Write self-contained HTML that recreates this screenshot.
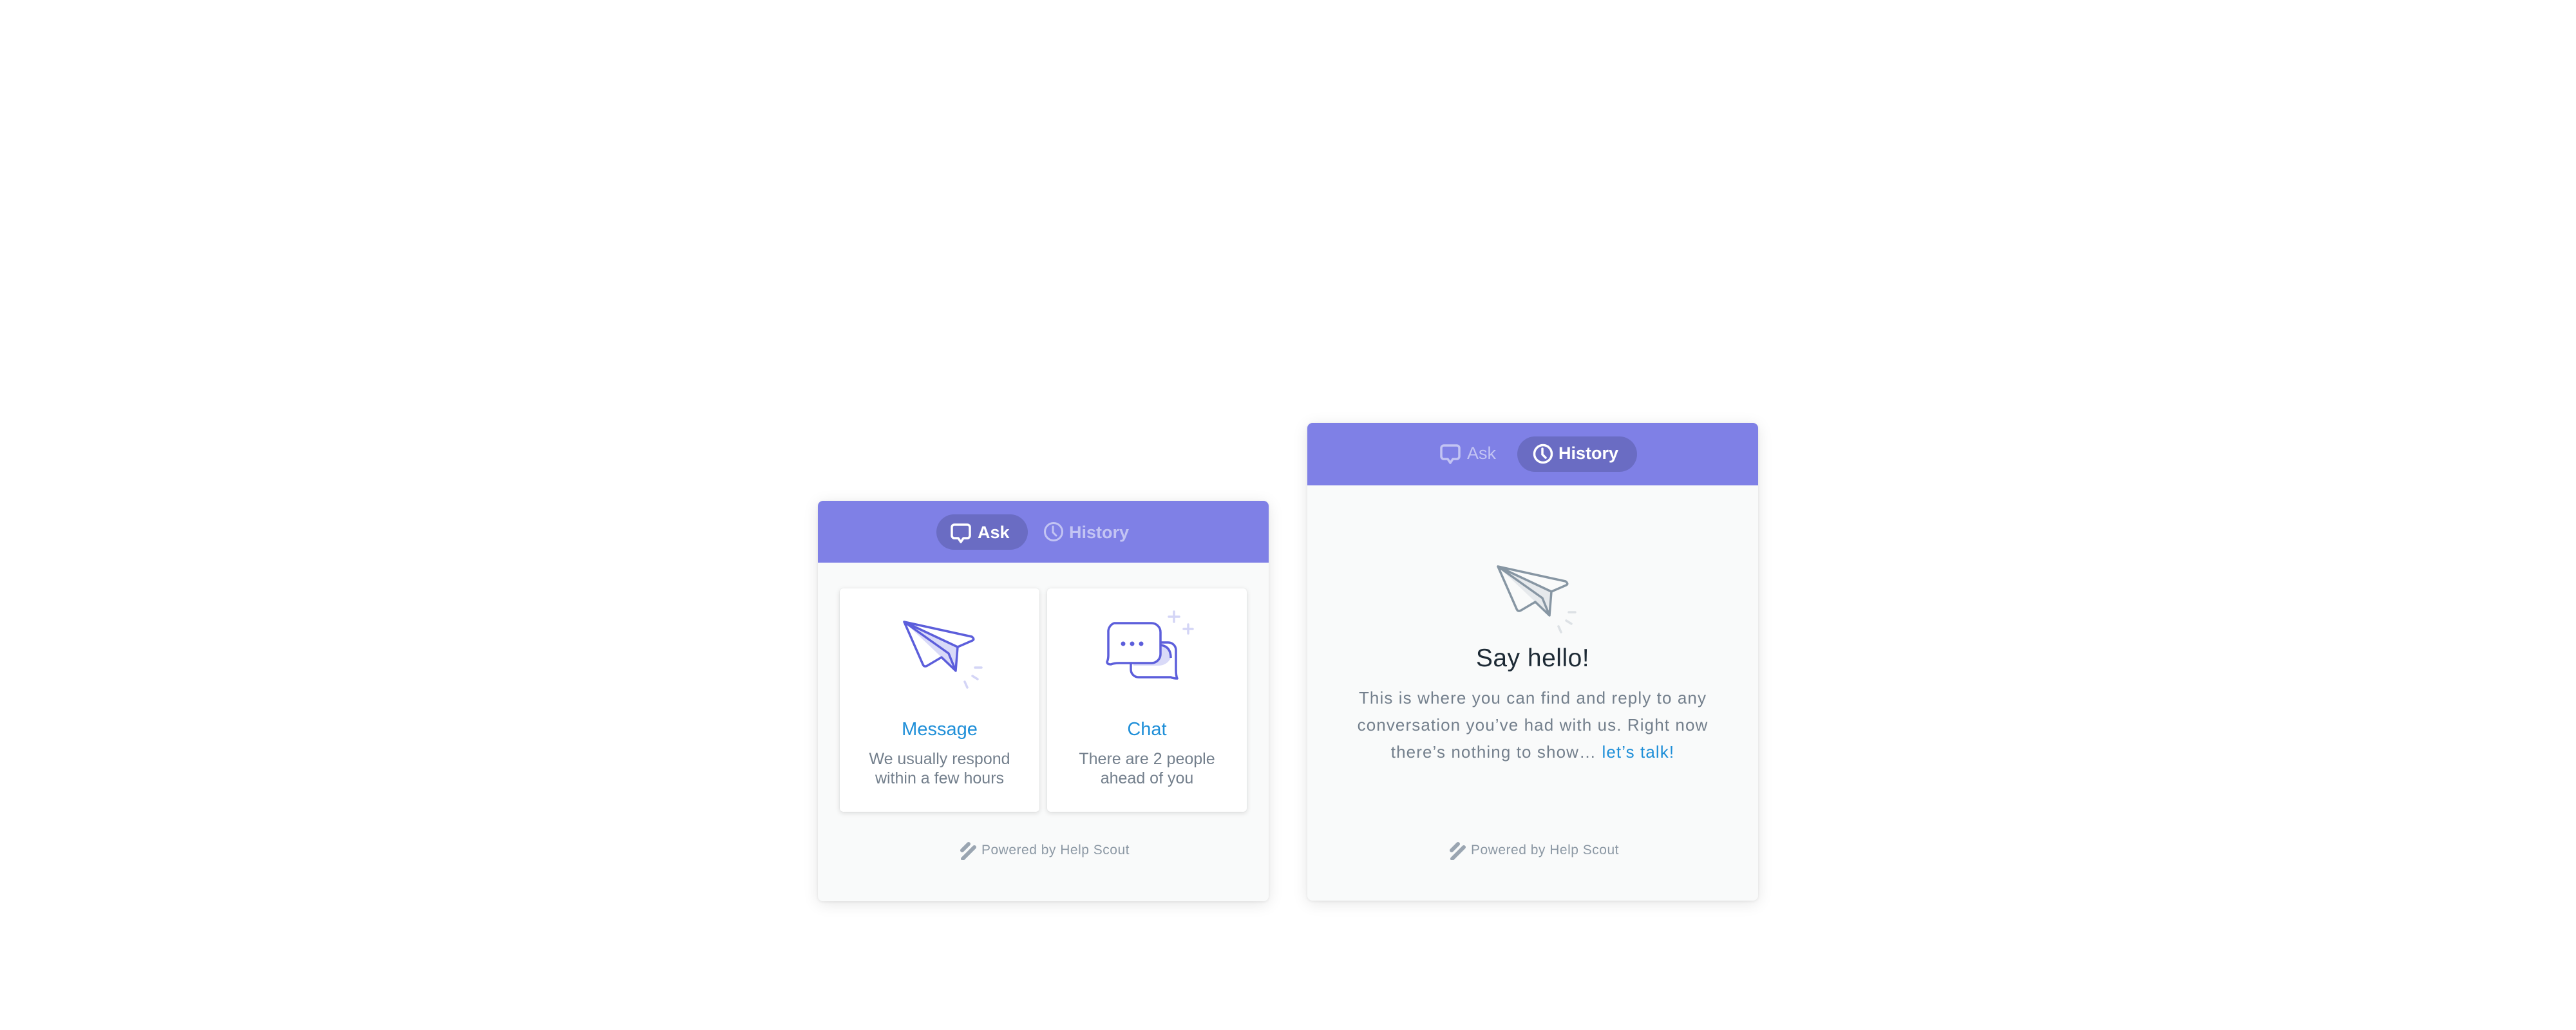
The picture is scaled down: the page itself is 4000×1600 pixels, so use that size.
<!DOCTYPE html>
<html><head><meta charset="utf-8"><style>
*{margin:0;padding:0;box-sizing:border-box}
body{width:4000px;height:1600px;background:#fff;position:relative;overflow:hidden;font-family:"Liberation Sans",sans-serif}
.w{position:absolute;background:#f9fafa;border-radius:8px;box-shadow:0 4px 24px rgba(0,0,0,.10),0 1px 4px rgba(0,0,0,.08);overflow:hidden}
.hd{position:absolute;left:0;top:0;width:100%;background:#7f80e6}
.pill{position:absolute;background:#6a6cc3;border-radius:28px}
.t{position:absolute;white-space:nowrap}
.card{position:absolute;background:#fff;border-radius:5px;box-shadow:0 2px 8px rgba(0,0,0,.13),0 0 1px rgba(0,0,0,.15)}
.c{text-align:center}
</style></head><body>

<div class="w" style="left:1270px;top:778px;width:700px;height:622px">
 <div class="hd" style="height:96px"></div>
 <div class="pill" style="left:184px;top:21px;width:142px;height:55px"></div>
 <svg style="position:absolute;left:206px;top:34px" width="32" height="34" viewBox="0 0 32 34"><path d="M6 3h20a4 4 0 0 1 4 4v13a4 4 0 0 1-4 4h-6l-4 6-4-6H6a4 4 0 0 1-4-4V7a4 4 0 0 1 4-4z" fill="none" stroke="#fff" stroke-width="3.5" stroke-linejoin="round"/></svg>
 <div class="t" style="left:248px;top:34px;font-size:27px;font-weight:bold;color:#fff">Ask</div>
 <svg style="position:absolute;left:350px;top:32px" width="32" height="32" viewBox="0 0 32 32"><circle cx="16" cy="16" r="13.5" fill="none" stroke="#c3c4f3" stroke-width="3"/><path d="M15 8v9l5 5" fill="none" stroke="#c3c4f3" stroke-width="3" stroke-linecap="round"/></svg>
 <div class="t" style="left:390px;top:34px;font-size:27px;font-weight:bold;color:#c3c4f3">History</div>

 <div class="card" style="left:34px;top:136px;width:310px;height:347px">
  <svg style="position:absolute;left:98px;top:50px" width="128" height="110" viewBox="0 0 128 110"><path d="M2 2L85 41L82 78L60 57Z" fill="#d9daf8"/><path d="M2 2L107 25Q112 29 108 31L85 41L82 78L60 57L38 70Q33 73 31 68Z M2 2L85 41 M2 2L71 51L82 78" fill="none" stroke="#5c5edb" stroke-width="3.5" stroke-linejoin="round" stroke-linecap="round"/><path d="M112 73h10M108 86l8 5M96 95l4 9" stroke="#d4d5f6" stroke-width="3.5" stroke-linecap="round"/></svg>
  <div class="t c" style="left:0;width:310px;top:203px;font-size:29px;color:#1f8fd8">Message</div>
  <div class="t c" style="left:0;width:310px;top:250px;font-size:25px;line-height:30px;color:#737f8c">We usually respond<br>within a few hours</div>
 </div>
 <div class="card" style="left:356px;top:136px;width:310px;height:347px">
  <svg style="position:absolute;left:90px;top:32px" width="140" height="116" viewBox="0 0 140 116"><path d="M40 52h58a12 12 0 0 1 12 12v30q0 10 2 14q-6 0-10-2h-50a12 12 0 0 1-12-12z" fill="#fff" stroke="#5c5edb" stroke-width="3.5" stroke-linejoin="round"/><path d="M86 56q16 2 16 20q-6 12-20 12h-38v-32z" fill="#d9daf8"/><path d="M14 22h58a14 14 0 0 1 14 14v34a14 14 0 0 1-14 14h-50q-8 0-13 2q-6 0-6-4q2-4 2-10v-36a14 14 0 0 1 9-14z" fill="#fff" stroke="#5c5edb" stroke-width="3.5" stroke-linejoin="round"/><path d="M86 56q16 2 16 20" fill="none" stroke="#5c5edb" stroke-width="3.5"/><circle cx="28" cy="54" r="3.5" fill="#5c5edb"/><circle cx="42" cy="54" r="3.5" fill="#5c5edb"/><circle cx="56" cy="54" r="3.5" fill="#5c5edb"/><path d="M107 4v16M99 12h16M129 24v14M122 31h14" stroke="#d4d5f6" stroke-width="3.5" stroke-linecap="round"/></svg>
  <div class="t c" style="left:0;width:310px;top:203px;font-size:29px;color:#1f8fd8">Chat</div>
  <div class="t c" style="left:0;width:310px;top:250px;font-size:25px;line-height:30px;color:#737f8c">There are 2 people<br>ahead of you</div>
 </div>
 <svg style="position:absolute;left:220px;top:530px" width="26" height="28" viewBox="0 0 26 28"><path d="M4 13L14 3M5 26L23 8" stroke="#9aa5b1" stroke-width="6" stroke-linecap="round"/></svg>
 <div class="t" style="left:254px;top:531px;font-size:21px;color:#8c98a4;letter-spacing:0.5px">Powered by Help Scout</div>
</div>

<div class="w" style="left:2030px;top:657px;width:700px;height:742px">
 <div class="hd" style="height:97px"></div>
 <div class="pill" style="left:326px;top:21px;width:186px;height:55px"></div>
 <svg style="position:absolute;left:206px;top:32px" width="32" height="34" viewBox="0 0 32 34"><path d="M6 3h20a4 4 0 0 1 4 4v13a4 4 0 0 1-4 4h-6l-4 6-4-6H6a4 4 0 0 1-4-4V7a4 4 0 0 1 4-4z" fill="none" stroke="#c3c4f3" stroke-width="3.5" stroke-linejoin="round"/></svg>
 <div class="t" style="left:248px;top:32px;font-size:27px;color:#c3c4f3">Ask</div>
 <svg style="position:absolute;left:350px;top:32px" width="32" height="32" viewBox="0 0 32 32"><circle cx="16" cy="16" r="13.5" fill="none" stroke="#fff" stroke-width="3.5"/><path d="M15 8v9l5 5" fill="none" stroke="#fff" stroke-width="3.5" stroke-linecap="round"/></svg>
 <div class="t" style="left:390px;top:32px;font-size:27px;font-weight:bold;color:#fff">History</div>
 <svg style="position:absolute;left:294px;top:221px" width="128" height="110" viewBox="0 0 128 110"><path d="M2 2L85 41L82 78L60 57Z" fill="#e6e9ec"/><path d="M2 2L107 25Q112 29 108 31L85 41L82 78L60 57L38 70Q33 73 31 68Z M2 2L85 41 M2 2L71 51L82 78" fill="none" stroke="#8796a3" stroke-width="3.5" stroke-linejoin="round" stroke-linecap="round"/><path d="M112 73h10M108 86l8 5M96 95l4 9" stroke="#dde1e5" stroke-width="3.5" stroke-linecap="round"/></svg>
 <div class="t c" style="left:0;width:700px;top:344px;font-size:39px;color:#1d2a35;letter-spacing:0.5px">Say hello!</div>
 <div class="t c" style="left:0;width:700px;top:406px;font-size:26px;line-height:42px;letter-spacing:1.1px;color:#737f8c">This is where you can find and reply to any<br>conversation you’ve had with us. Right now<br>there’s nothing to show… <span style="color:#1f8fd8">let’s talk!</span></div>
 <svg style="position:absolute;left:220px;top:651px" width="26" height="28" viewBox="0 0 26 28"><path d="M4 13L14 3M5 26L23 8" stroke="#9aa5b1" stroke-width="6" stroke-linecap="round"/></svg>
 <div class="t" style="left:254px;top:652px;font-size:21px;color:#8c98a4;letter-spacing:0.5px">Powered by Help Scout</div>
</div>
</body></html>
